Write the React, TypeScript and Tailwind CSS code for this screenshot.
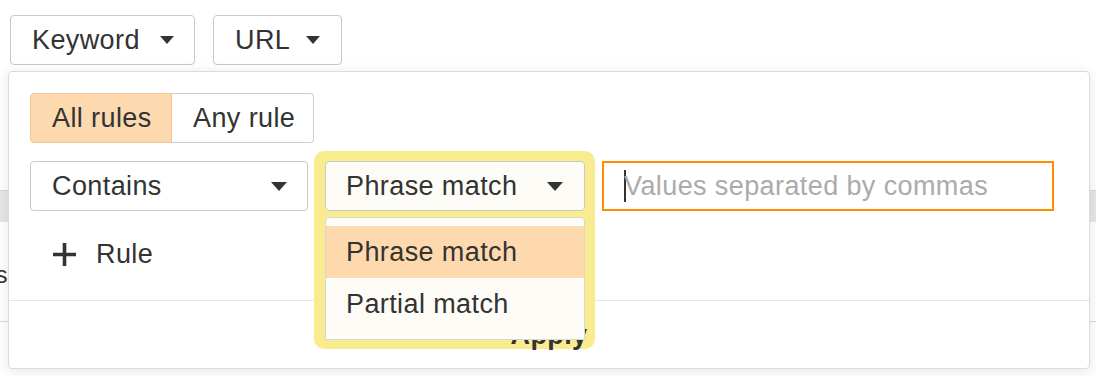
import React from "react";

function Caret({ w = 14, h = 8 }: { w?: number; h?: number }) {
  return (
    <svg width={w} height={h} viewBox={`0 0 ${w} ${h}`} className="shrink-0">
      <polygon points={`0,0 ${w},0 ${w / 2},${h}`} fill="#333" />
    </svg>
  );
}

export default function App() {
  return (
    <div className="relative w-[1096px] h-[376px] overflow-hidden bg-white font-['Liberation_Sans',Arial,sans-serif] text-[#333] text-[27px] tracking-[0.4px] leading-none">
      {/* background page */}
      <div className="h-[190px]">
        <div className="flex gap-[18px] pt-[15px] pl-[10px]">
          <div className="h-[50px] w-[185px] rounded-[4px] border border-[#c8c8c8] bg-white flex items-center justify-between pl-[21px] pr-[20px]">
            <span>Keyword</span>
            <Caret />
          </div>
          <div className="h-[50px] w-[129px] rounded-[4px] border border-[#c8c8c8] bg-white flex items-center justify-between pl-[21px] pr-[21px]">
            <span>URL</span>
            <Caret />
          </div>
        </div>
      </div>
      <div className="h-[32px] bg-[#e7e7e7] border-t border-[#dadada]" />
      <div className="h-[100px] flex items-center border-b border-[#d9d9d9]">
        <div className="w-[8px] flex justify-end whitespace-nowrap text-[24px] pt-[6px]">
          <span>Keywords</span>
        </div>
      </div>

      {/* popover panel */}
      <div className="absolute left-[8px] top-[71px] w-[1082px] rounded-[4px] border border-[#dcdcdc] bg-white shadow-[0_2px_14px_rgba(0,0,0,0.10)]">
        <div className="pl-[21px] pt-[21px]">
          <div className="flex h-[50px]">
            <div className="w-[142px] h-full flex items-center pl-[21px] bg-[#fdd9b0] border border-[#f1c596] rounded-l-[4px]">
              All rules
            </div>
            <div className="w-[142px] h-full flex items-center pl-[21px] border border-l-0 border-[#cccccc] rounded-r-[4px]">
              Any rule
            </div>
          </div>

          <div className="mt-[18px] flex items-start gap-[17px]">
            <div className="w-[278px] h-[50px] rounded-[4px] border border-[#c8c8c8] flex items-center justify-between pl-[21px] pr-[20px]">
              <span>Contains</span>
              <Caret w={16} h={9} />
            </div>

            <div className="relative w-[260px] h-[50px]">
              <div className="absolute left-[-11px] top-[-10px] w-[281px] h-[198px] rounded-[10px] bg-[#f8ec8f]" />
              <div className="relative z-[2] h-full rounded-[4px] border border-[#c8c8c8] bg-[#fdfcf7] flex items-center justify-between pl-[20px] pr-[21px]">
                <span>Phrase match</span>
                <Caret w={16} h={9} />
              </div>
              <div className="absolute z-[2] left-0 top-[56px] w-[260px] h-[123px] rounded-t-[4px] border border-[#d8d8d8] bg-[#fdfcf7] pt-[8px]">
                <div className="h-[52px] flex items-center pl-[20px] bg-[#fed9ae]">Phrase match</div>
                <div className="h-[52px] flex items-center pl-[20px]">Partial match</div>
              </div>
            </div>

            <div className="w-[452px] h-[50px] border-2 border-[#ff8c00] flex items-center pl-[20px] text-[#ababab]">
              <span className="inline-block w-[2px] h-[32px] bg-[#333] -mr-[2px]" />
              <span>Values separated by commas</span>
            </div>
          </div>

          <div className="mt-[18px] h-[50px] flex items-center pl-[22px] gap-[19px]">
            <svg width="25" height="25" viewBox="0 0 25 25" className="shrink-0">
              <path d="M12.5 1v23M1 12.5h23" stroke="#333" strokeWidth="3.6" />
            </svg>
            <span>Rule</span>
          </div>
        </div>

        <div className="mt-[21px] border-t border-[#e5e5e5]" />
        <div className="h-[67px] flex items-center justify-center">
          <span className="relative z-[1] font-bold pt-[2px]">Apply</span>
        </div>
      </div>
    </div>
  );
}
